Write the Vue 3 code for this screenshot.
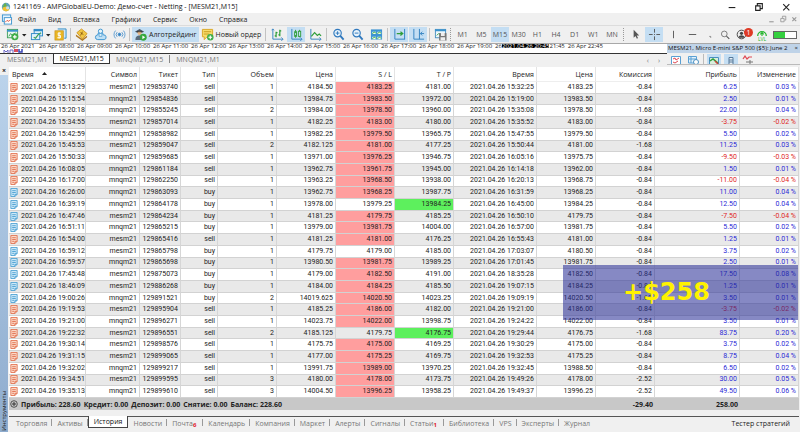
<script setup>
const menu = ['Файл', 'Вид', 'Вставка', 'Графики', 'Сервис', 'Окно', 'Справка']
const frames = ['M1', 'M5', 'M15', 'M30', 'H1', 'H4', 'D1', 'W1', 'MN']
const hours = ['2021', '08:00', '09:00', '10:00', '11:00', '12:00', '13:00', '14:00', '15:00', '16:00', '17:00', '18:00', '19:00']
const charts = ['MESM21,M1', 'MESM21,M15', 'MNQM21,M15', 'MNQM21,M1']
const columns = [
  ['Время', 77], ['Символ', 54], ['Тикет', 41], ['Тип', 37], ['Объем', 59], ['Цена', 59], ['S / L', 59],
  ['T / P', 59], ['Время', 83], ['Цена', 59], ['Комиссия', 59], ['Прибыль', 85], ['Изменение', 59]
]
const panels = [
  ['Торговля'], ['Активы'], ['История'], ['Новости'], ['Почта', 6], ['Календарь'], ['Компания'], ['Маркет'],
  ['Алерты'], ['Сигналы'], ['Статьи', 1], ['Библиотека'], ['VPS'], ['Эксперты'], ['Журнал']
]

// open time | symbol | ticket | type | volume | price | S/L | T/P | close time | price | commission | profit | change | hit
const deals = `15:13:29|mesm21|129853740|sell|1|4184.50|4183.25|4181.00|15:32:25|4183.25|-0.84|6.25|0.03|sl
15:15:54|mnqm21|129854836|sell|1|13984.75|13983.50|13972.00|15:19:00|13983.50|-0.84|2.50|0.01|sl
15:20:18|mnqm21|129855245|sell|2|13984.00|13978.50|13960.00|15:35:08|13978.50|-1.68|22.00|0.04|sl
15:34:55|mesm21|129857014|sell|1|4182.25|4183.00|4180.00|15:35:52|4183.00|-0.84|-3.75|-0.02|sl
15:42:59|mnqm21|129858982|sell|1|13982.25|13979.50|13965.75|15:47:55|13979.50|-0.84|5.50|0.02|sl
15:45:53|mesm21|129859047|sell|2|4182.125|4181.00|4177.25|15:50:44|4181.00|-1.68|11.25|0.03|sl
15:50:33|mnqm21|129859685|sell|1|13971.00|13976.25|13946.75|16:05:16|13975.75|-0.84|-9.50|-0.03|sl
16:08:05|mnqm21|129861184|sell|1|13962.75|13961.75|13945.00|16:14:18|13962.00|-0.84|1.50|0.01|sl
16:17:00|mnqm21|129862250|sell|1|13963.25|13968.50|13938.00|16:20:13|13968.75|-0.84|-11.00|-0.04|sl
16:26:00|mnqm21|129863093|buy|1|13962.75|13968.25|13987.75|16:31:59|13968.25|-0.84|11.00|0.04|sl
16:39:19|mnqm21|129864178|buy|1|13978.00|13979.25|13984.25|16:45:00|13984.25|-0.84|12.50|0.04|tp
16:47:46|mesm21|129864234|buy|1|4181.25|4179.75|4185.25|16:50:10|4179.75|-0.84|-7.50|-0.04|sl
16:51:11|mnqm21|129865215|buy|1|13979.00|13981.75|14004.00|16:57:00|13981.75|-0.84|5.50|0.02|sl
16:54:00|mesm21|129865416|sell|1|4181.25|4181.00|4176.25|16:55:43|4181.00|-0.84|1.25|0.01|sl
16:59:12|mesm21|129865798|buy|1|4179.75|4179.00|4185.00|17:03:07|4180.50|-0.84|3.75|0.02|
16:59:57|mnqm21|129865698|buy|1|13980.50|13981.75|13989.25|17:01:45|13981.75|-0.84|2.50|0.01|sl
17:45:48|mesm21|129875073|buy|1|4179.00|4182.50|4191.00|18:35:28|4182.50|-0.84|17.50|0.08|sl
18:46:09|mesm21|129886268|buy|1|4184.00|4184.25|4185.50|19:07:15|4184.25|-0.84|1.25|0.01|sl
19:00:26|mnqm21|129891521|buy|2|14019.625|14020.50|14023.25|19:09:19|14020.50|-1.68|3.50|0.01|sl
19:19:53|mesm21|129895904|sell|1|4185.25|4186.00|4182.00|19:21:00|4186.00|-0.84|-3.75|-0.02|sl
19:21:00|mnqm21|129896271|sell|1|14023.75|14022.00|13998.75|19:24:22|14022.00|-0.84|3.50|0.01|sl
19:22:32|mesm21|129896551|sell|2|4185.125|4179.75|4176.75|19:29:44|4176.75|-1.68|83.75|0.20|tp
19:30:14|mesm21|129898576|sell|1|4175.75|4175.00|4169.25|19:30:29|4175.00|-0.84|3.75|0.02|sl
19:31:15|mesm21|129899065|sell|1|4177.00|4175.25|4169.75|19:32:53|4175.25|-0.84|8.75|0.04|sl
19:32:02|mnqm21|129899217|sell|1|13991.75|13989.00|13970.25|19:32:45|13988.50|-0.84|6.50|0.02|sl
19:34:51|mesm21|129899595|sell|3|4180.00|4178.00|4173.75|19:49:26|4178.00|-2.52|30.00|0.05|sl
19:35:13|mnqm21|129899610|sell|3|14004.50|13996.25|13958.25|19:49:37|13996.25|-2.52|49.50|0.06|sl`
  .split('\n').map(l => l.split('|'))

const day = '2021.04.26 '
const isLoss = d => d[11].startsWith('-')
</script>

<template>
  <div class="app">
    <header class="title">
      <svg class="logo" viewBox="0 0 12 12"><circle cx="6" cy="6" r="5" fill="#5fa6b8" /><path d="M2 6l3-5 2 4z" fill="#6db33f" /><path d="M2 6.500l5-1 3 4-4 2-4-2z" fill="#f2c230" /><circle cx="8" cy="7" r="2" fill="#c9dfe8" /></svg>
      <h1>1241169 - AMPGlobalEU-Demo: Демо-счет - Netting - [MESM21,M15]</h1>
      <div class="win">
        <button aria-label="Свернуть"><svg viewBox="0 0 9 9"><path d="M1.500 5h6" stroke="#222" /></svg></button>
        <button aria-label="Восстановить"><svg viewBox="0 0 9 9"><path d="M1.500 3.500h4v4h-4zM3 3V1.500h4.500V6H6" fill="none" stroke="#222" /></svg></button>
        <button aria-label="Закрыть"><svg viewBox="0 0 9 9"><path d="M2 2l5.500 5.500M7.500 2L2 7.500" stroke="#222" /></svg></button>
      </div>
    </header>

    <nav class="menu">
      <svg class="doc" viewBox="0 0 12 12"><rect x="1" y="1" width="9" height="7" fill="#e6f3fc" stroke="#3a93cf" /><rect x="3" y="4" width="8" height="7" fill="#fff" stroke="#3a93cf" /><path d="M4 9l2-2 2 1 2-2" fill="none" stroke="#e0523a" /></svg>
      <a v-for="m in menu" :key="m" href="#">{{ m }}</a>
      <div class="win inner">
        <button aria-label="Свернуть окно"><svg viewBox="0 0 9 9"><path d="M2 7h4" stroke="#999" /></svg></button>
        <button aria-label="Восстановить окно"><svg viewBox="0 0 9 9"><path d="M2.500 4h3v3h-3zM4 3.500V2h3v3.500H6" fill="none" stroke="#999" stroke-width=".8" /></svg></button>
        <button aria-label="Закрыть окно"><svg viewBox="0 0 9 9"><path d="M3 3l3.500 3.500M6.500 3L3 6.500" stroke="#999" /></svg></button>
      </div>
    </nav>

    <div class="tools">
      <button class="tool" aria-label="Новый график"><svg viewBox="0 0 14 14"><rect x="1.500" y="1.500" width="11" height="9" fill="#e9f7ef" stroke="#41a05a" /><path d="M1 3h12" stroke="#3a93cf" stroke-width="2" /><path d="M3 9l2-3 2 2 3-3" fill="none" stroke="#41a05a" /><circle cx="9.500" cy="9.500" r="3.800" fill="#3fae49" /><path d="M9.500 7.500v4M7.500 9.500h4" stroke="#fff" stroke-width="1.200" /></svg></button>
      <button class="drop" aria-label="Список графиков"><svg viewBox="0 0 6 4"><path d="M1 1h4.500L3.200 3.600z" fill="#222" /></svg></button>
      <button class="tool" aria-label="Профили"><svg viewBox="0 0 14 14"><rect x="4.500" y="1.500" width="9" height="7" fill="#dff1fb" stroke="#2f8bc6" /><path d="M4 2.500h10" stroke="#2f8bc6" stroke-width="2" /><rect x="1.500" y="6" width="9" height="6.500" fill="#dff1fb" stroke="#2f8bc6" /><path d="M4 10l2 1 3-4 3-2" fill="none" stroke="#41a05a" stroke-width="1.300" /></svg></button>
      <button class="drop" aria-label="Список профилей"><svg viewBox="0 0 6 4"><path d="M1 1h4.500L3.200 3.600z" fill="#222" /></svg></button>
      <button class="tool" aria-label="Обзор рынка"><svg viewBox="0 0 14 14"><path d="M4 1h9v10h-2" fill="#cfe7f7" stroke="#2f8bc6" /><rect x="1" y="3" width="9" height="10" fill="#e9b624" stroke="#c8911a" stroke-width=".7" /><path d="M7.500 5.500H4.500V8h2.500v2.500H3.500M5.500 4.500v7" fill="none" stroke="#fff" /></svg></button>
      <i class="sep"></i>
      <div class="group wide">
        <button class="tool" aria-label="Навигатор"><svg viewBox="0 0 14 14"><path d="M2 5l5-4 6 5-5 6z" fill="#f1c644" stroke="#c98b16" stroke-width=".8" /><path d="M1 7l7 5 5-4v2l-5 4-7-5z" fill="#b27a1f" /><path d="M6 5l3 2M8 4l-2 4" stroke="#8a5c13" /></svg></button>
        <button class="tool" aria-label="Облако"><svg viewBox="0 0 14 14"><path d="M4 12.500a2.500 2.500 0 010-5 3 3 0 016 0 2.500 2.500 0 011 5z" fill="#bfe0f5" stroke="#3a93cf" /><circle cx="7" cy="3.500" r="2.300" fill="#e5f4fc" stroke="#3a93cf" /><path d="M5.500 6h3v3h-3z" fill="#e5f4fc" stroke="#3a93cf" stroke-width=".7" /></svg></button>
        <button class="tool" aria-label="Сигналы"><svg viewBox="0 0 14 14" fill="none" stroke="#5a9bd0"><circle cx="7" cy="7" r="1.500" fill="#2f7fbf" /><path d="M4.500 4.500a3.500 3.500 0 000 5M9.500 4.500a3.500 3.500 0 010 5M2.800 2.800a6 6 0 000 8.400M11.200 2.800a6 6 0 010 8.400" /></svg></button>
      </div>
      <i class="sep"></i>
      <button class="tool label on"><svg viewBox="0 0 14 14"><path d="M1 4l5-3 5 3-5 2z" fill="#4b5563" /><circle cx="6" cy="5.500" r="2.300" fill="#e8b88a" /><path d="M3 4h6" stroke="#333" /><path d="M1.500 13c0-4 2-5 4.500-5s4.500 1 4.500 5z" fill="#5b6b7c" /><circle cx="10" cy="10" r="3.700" fill="#35a83c" /><path d="M9 8l3 2-3 2z" fill="#fff" /></svg>Алготрейдинг</button>
      <button class="tool label"><svg viewBox="0 0 14 14"><path d="M1.500 1.500h11v8h-6l-3 3v-3h-2z" fill="#f7dc6b" stroke="#d9a520" /><path d="M3 4h8M3 6.500h6" stroke="#c79a1c" /><circle cx="10" cy="10" r="3.500" fill="#3fae49" /><path d="M10 8v4M8 10h4" stroke="#fff" stroke-width="1.200" /></svg>Новый ордер</button>
      <i class="sep"></i>
      <div class="group">
        <button class="tool" aria-label="Бары"><svg viewBox="0 0 14 14" fill="none"><path d="M2 1v11h11" stroke="#2f7fbf" /><path d="M11 10l2 2-2 2M.5 2.500L2 1l1.500 1.500" stroke="#2f7fbf" stroke-width=".8" /><path d="M5.500 4v6M4 8.500h1.500M5.500 5H7M9.500 2v7M8 7.500h1.500M9.500 3H11" stroke="#2f9e3a" stroke-width="1.300" /></svg></button>
        <button class="tool on" aria-label="Свечи"><svg viewBox="0 0 14 14" fill="none"><path d="M2 1v11h11" stroke="#2f7fbf" /><path d="M11 10l2 2-2 2" stroke="#2f7fbf" stroke-width=".8" /><rect x="5" y="4" width="2" height="5" stroke="#2f9e3a" /><rect x="9" y="3.500" width="2.500" height="5.500" stroke="#2f9e3a" /><path d="M6 2v2M6 9v1.500M10.300 2v1.500M10.300 9v1" stroke="#2f9e3a" /></svg></button>
        <button class="tool" aria-label="Линия"><svg viewBox="0 0 14 14" fill="none"><path d="M2 1v11h11" stroke="#2f7fbf" /><path d="M11 10l2 2-2 2" stroke="#2f7fbf" stroke-width=".8" /><path d="M2.500 9L6 5l3 3 2-1.500 2 2" stroke="#2f9e3a" stroke-width="1.300" /></svg></button>
      </div>
      <i class="sep"></i>
      <div class="group">
        <button class="tool" aria-label="Увеличить"><svg viewBox="0 0 14 14" fill="none" stroke="#2f78bd"><circle cx="6" cy="5.500" r="4" fill="#e6f2fb" stroke-width="1.200" /><path d="M9 8.500l3.500 4" stroke-width="2" /><path d="M6 3.500v4M4 5.500h4" /></svg></button>
        <button class="tool" aria-label="Уменьшить"><svg viewBox="0 0 14 14" fill="none" stroke="#2f78bd"><circle cx="6" cy="5.500" r="4" fill="#e6f2fb" stroke-width="1.200" /><path d="M9 8.500l3.500 4" stroke-width="2" /><path d="M4 5.500h4" /></svg></button>
        <button class="tool" aria-label="Плитка"><svg viewBox="0 0 14 14"><path d="M1 1.500h12v11H1z" fill="#3d94d2" /><path d="M2.500 4h4v2.500h-4zM8 4h4v2.500H8zM2.500 9.500h4V12h-4zM8 9.500h4V12H8z" fill="#f4fbe9" /><path d="M2.500 6l2-1.500 2 1M8 6l2-1.500 2 1M2.500 11.500l2-1.500 2 1M8 11.500l2-1.500 2 1" stroke="#3fae49" fill="none" /></svg></button>
      </div>
      <i class="sep"></i>
      <div class="group">
        <button class="tool on" aria-label="Автопрокрутка"><svg viewBox="0 0 14 14" fill="none" stroke="#2f7fbf"><path d="M2 1v11h11" /><path d="M12.500 1v11" /><path d="M4 6h6M8 4l2.500 2L8 8" stroke="#2f9e3a" stroke-width="1.300" /></svg></button>
        <button class="tool on" aria-label="Сдвиг графика"><svg viewBox="0 0 14 14" fill="none" stroke="#2f7fbf"><path d="M2 1v11h11M8 1v11" /><path d="M9 6h4M11 4L9 6l2 2" /></svg></button>
      </div>
      <i class="sep"></i>
      <button class="tool" aria-label="Шаблоны"><svg viewBox="0 0 14 14"><rect x="1.500" y="1.500" width="11" height="9" fill="#eef7fc" stroke="#4a90bf" /><path d="M1 2.500h12" stroke="#3a93cf" stroke-width="2" /><path d="M3 8l2-2 2 1" stroke="#2f9e3a" fill="none" /><rect x="5.500" y="5.500" width="8" height="8" fill="#777" /><path d="M7.500 5.500h4v3h-4zM7 10h5v3.500H7z" fill="#eee" /></svg></button>
      <i class="sep dots"></i>
      <div class="frames">
        <button v-for="f in frames" :key="f" :class="{ on: f === 'M15' }">{{ f }}</button>
      </div>
      <i class="sep dots"></i>
      <div class="group">
        <button class="tool" aria-label="Курсор"><svg viewBox="0 0 14 14"><path d="M5 2v8.500l2-2 1.500 3 1.200-.7L8.300 8H11z" fill="#555" /></svg></button>
        <button class="tool on" aria-label="Перекрестие"><svg viewBox="0 0 14 14"><path d="M7 1v4M7 9v4M1 7h4M9 7h4M6.500 7h1" stroke="#555" /></svg></button>
        <button class="tool" aria-label="Вертикальная линия"><svg viewBox="0 0 14 14"><path d="M7 3v8" stroke="#555" /></svg></button>
        <button class="tool" aria-label="Горизонтальная линия"><svg viewBox="0 0 14 14"><path d="M3 7h8" stroke="#555" /></svg></button>
      </div>
      <div class="side">
        <button class="small" aria-label="Ещё"><svg viewBox="0 0 14 14"><path d="M6 9h2v2" fill="none" stroke="#666" /></svg></button>
        <button class="small" aria-label="Поиск"><svg viewBox="0 0 14 14" fill="none" stroke="#555"><circle cx="6" cy="5.500" r="4" /><path d="M9 8.500l4 4" stroke-width="1.500" /></svg></button>
        <button class="user" aria-label="Сообщения"><svg viewBox="0 0 14 14"><circle cx="7" cy="7" r="5.500" fill="#eee" stroke="#444" stroke-width="1.200" /><circle cx="7" cy="5.500" r="2" fill="#444" /><path d="M3 11c1-4 7-4 8 0z" fill="#444" /></svg><b>1</b></button>
        <button class="lvl" aria-label="Уровень"><svg viewBox="0 0 14 9"><path d="M2 8a5 5 0 1110 0" fill="none" stroke="#25b52d" stroke-width="1.500" /><path d="M7 8V4M5 6l2-2 2 2" fill="none" stroke="#25b52d" stroke-width="1.300" /></svg><span>LVL</span></button>
        <div class="battery"><i></i></div>
      </div>
    </div>

    <div class="upper">
      <div class="work">
        <div class="axis">
          <span v-for="h in hours" :key="h" class="tick">26 Apr {{ h }}</span>
          <span class="cut">26</span><span class="now">2021.04.26 20:45</span><span>21:45</span><span class="last">26 Apr 22:45</span>
          <svg class="marks" viewBox="0 0 20 5"><path d="M1 5V2l2 2 2-2v3M7 5V2h3v3" fill="none" stroke="#6a67c4" /><path d="M11 1h4v3h-4z" fill="#d84b5c" /><path d="M16 1v3h3V1" fill="none" stroke="#3b46b8" stroke-width="1.500" /></svg>
        </div>
        <div class="charts">
          <button v-for="c in charts" :key="c" :class="{ active: c === 'MESM21,M15' }">{{ c }}</button>
          <div class="arrows"><button aria-label="Влево">‹</button><button aria-label="Вправо">›</button></div>
        </div>
      </div>
      <aside class="depth">
        <div class="cap"><span>MESM21, Micro E-mini S&amp;P 500 ($5): June 2</span><button aria-label="Закрыть стакан">×</button></div>
        <div class="icons">
          <button aria-label="Тики"><svg viewBox="0 0 12 9"><path d="M1.500 9V1.500h9V9" fill="#fff" stroke="#5aa0d4" /><path d="M3 4l2-1 1 2 3-2M3 7l2 1 3-2" fill="none" stroke="#df4a55" /></svg></button>
          <button aria-label="Таблица"><svg viewBox="0 0 12 9"><path d="M1.500 1.500h8V8h-8zM1 4h9M4 2v6" fill="#e4f2fb" stroke="#5aa0d4" /><circle cx="9" cy="7" r="2.500" fill="#fff" stroke="#4a8fc0" /></svg></button>
          <i></i>
          <button class="on" aria-label="Торговля"><svg viewBox="0 0 12 9"><path d="M1.500 9V2.500h9V9" fill="#d7efdc" stroke="#4a90bf" /><path d="M2 6l3-2 5 4" fill="none" stroke="#2f9e3a" stroke-width="1.500" /><path d="M7 6l3 3" stroke="#d0453c" stroke-width="1.500" /></svg></button>
          <button class="on" aria-label="Объёмы"><svg viewBox="0 0 12 9"><path d="M4 9V2.500h4V9M4 5h4M4 7h4" fill="#e8f1f8" stroke="#55799a" /></svg></button>
          <button aria-label="Спред"><svg viewBox="0 0 12 9"><path d="M1 4l2-3 2 3 2-2 3 0" fill="none" stroke="#df4a55" stroke-width="1.200" /><path d="M4 7h7M8 5v4" stroke="#777" /></svg></button>
        </div>
      </aside>
    </div>

    <div class="terminal">
      <div class="strip">
        <button aria-label="Закрыть панель">×</button>
        <span>Инструменты</span>
      </div>
      <main class="body">
        <table>
          <colgroup><col v-for="(c, i) in columns" :key="i" :style="{ width: c[1] + 'px' }"></colgroup>
          <thead>
            <tr><th v-for="(c, i) in columns" :key="i">{{ c[0] }}<svg v-if="i === 0" class="sort" viewBox="0 0 5 3"><path d="M0 3h5L2.500 0z" fill="#222" /></svg></th></tr>
          </thead>
          <tbody>
            <tr v-for="d in deals" :key="d[2]">
              <td><div class="first"><svg class="note" :class="d[3]" viewBox="0 0 8 10"><path d="M.5.500h7v6.500l-2.500 2.500H.5z" /><path d="M2 3h4M2 5h4M2 7h2M7.500 7H5v2.500" /></svg>{{ day + d[0] }}</div></td>
              <td>{{ d[1] }}</td><td>{{ d[2] }}</td><td>{{ d[3] }}</td><td>{{ d[4] }}</td><td>{{ d[5] }}</td>
              <td :class="{ sl: d[13] === 'sl' }">{{ d[6] }}</td>
              <td :class="{ tp: d[13] === 'tp' }">{{ d[7] }}</td>
              <td>{{ day + d[8] }}</td><td>{{ d[9] }}</td><td>{{ d[10] }}</td>
              <td :class="isLoss(d) ? 'loss' : 'gain'">{{ d[11] }}</td>
              <td :class="isLoss(d) ? 'loss' : 'gain'">{{ d[12] }} %</td>
            </tr>
          </tbody>
          <tfoot>
            <tr>
              <td colspan="10"><div class="first"><svg class="plus" viewBox="0 0 8 8"><circle cx="4" cy="4" r="3.300" fill="none" stroke="#333" stroke-width=".8" /><path d="M4 2v4M2 4h4" stroke="#333" /></svg><span>Прибыль: 228.60</span><span>Кредит: 0.00</span><span>Депозит: 0.00</span><span>Снятие: 0.00</span><span>Баланс: 228.60</span></div></td>
              <td>-29.40</td><td>258.00</td><td></td>
            </tr>
          </tfoot>
        </table>
        <div class="panels">
          <button v-for="p in panels" :key="p[0]" :class="{ active: p[0] === 'История' }">{{ p[0] }}<sub v-if="p[1]">{{ p[1] }}</sub></button>
          <button class="tester">Тестер стратегий</button>
        </div>
        <div class="total">+$258</div>
      </main>
    </div>
  </div>
</template>

<style>
body { margin: 0; background: #f0f0f0; }
</style>

<style scoped>
.app { display: flex; flex-direction: column; min-height: 100vh; overflow: hidden; background: #f0f0f0; color: #222; font: 7px/9px "Open Sans", "Noto Sans", sans-serif; white-space: nowrap; }
button { display: flex; align-items: center; justify-content: center; margin: 0; padding: 0; border: 0; background: none; color: inherit; font: inherit; }
svg { display: block; flex: none; }
a { color: inherit; text-decoration: none; }

.title { display: flex; align-items: center; height: 13px; padding-left: 1px; background: #fff; }
.logo { width: 10px; height: 10px; margin-right: 2px; }
h1 { margin: 0; font: inherit; color: #111; }
.win { display: flex; gap: 17px; margin-left: auto; padding-right: 9px; }
.win svg { width: 10px; height: 10px; }
.menu { display: flex; align-items: center; gap: 12px; height: 12px; border-bottom: 1px solid #dcdcdc; padding-left: 1px; }
.doc { width: 12px; height: 11px; margin-right: -7px; }
.inner { gap: 1px; padding-right: 1px; }

.tools { display: flex; align-items: center; height: 17px; padding: 0 3px 0 4px; border-bottom: 1px solid #a8a8a8; }
.tool { width: 18px; height: 15px; }
.tools > .tool:not(.label), .wide .tool { width: 16px; }
.tool svg, .small svg, .user svg { width: 13px; height: 13px; }
.drop { width: 8px; }
.drop svg { width: 6px; height: 4px; }
.on { background: #c4def3; }
.group { display: flex; gap: 1px; }
.wide { gap: 3px; }
.sep { width: 1px; height: 13px; margin: 0 2px; background: #c2c2c2; }
.dots { width: 0; background: none; border-left: 1px dotted #999; }
.tool.label { width: auto; gap: 2px; padding: 0 2px; }
.frames { display: grid; grid-template-columns: repeat(9, 1fr); flex: 0 0 168px; height: 15px; color: #555; }
.side { display: flex; align-items: center; margin-left: auto; gap: 2px; }
.small { width: 13px; }
.small svg { width: 10px; height: 10px; }
.user { width: 20px; position: relative; }
.user svg { margin-right: 4px; width: 11px; height: 11px; }
.user b { position: absolute; right: 0; top: -1px; width: 9px; height: 9px; border-radius: 50%; background: #de3a25; color: #fff; font-weight: 400; }
.lvl { flex-direction: column; width: 14px; color: #25b52d; font-size: 5px; line-height: 4px; }
.lvl svg { width: 12px; height: 8px; }
.battery { width: 22px; height: 6px; margin-left: 2px; border: 1px solid #666; background: #fff; }
.battery i { display: block; width: 50%; height: 100%; background: #35d03f; }

.upper { display: flex; height: 22px; }
.work { flex: 1; min-width: 0; display: flex; flex-direction: column; }
.axis { position: relative; display: flex; height: 9px; overflow: hidden; padding-left: 1px; background: #fff; font-size: 6px; line-height: 4px; border-bottom: 1px solid #333; }
.axis span { flex: none; }
.tick { width: 37px; margin-right: 1px; }
.axis .cut { width: 7px; }
.now { height: 4px; background: #000; color: #fff; }
.last { margin-left: 3px; }
.marks { position: absolute; left: 3px; top: 4px; width: 20px; height: 5px; }
.charts { display: flex; height: 12px; color: #777; }
.charts > button { padding: 0 6px; height: 10px; }
.charts > button:first-child { padding-left: 7px; }
.charts > button.active { height: 11px; margin: -1px 0 0; padding: 0 5px; border: 1px solid #333; border-top: 0; background: #fff; color: #111; }
.charts > button.active + button { border-right: 1px solid #888; height: 8px; margin-top: 1px; }
.arrows { display: flex; gap: 9px; margin-left: auto; padding-right: 7px; }
.depth { flex: 0 0 133px; background: #f0f0f0; overflow: hidden; }
.cap { display: flex; justify-content: space-between; height: 9px; padding: 0 2px 0 1px; background: #bfd3e8; color: #111; font-size: 6px; overflow: hidden; }
.icons { display: flex; gap: 3px; height: 10px; padding: 1px 0 0 2px; border-bottom: 1px solid #bbb; }
.icons button { width: 14px; height: 10px; }
.icons button svg { width: 12px; height: 9px; }
.icons i { width: 1px; background: #bbb; }

.terminal { flex: 1; display: flex; }
.strip { display: flex; flex-direction: column; justify-content: space-between; align-items: center; flex: 0 0 8px; background: linear-gradient(#bcd4ec, #8eacce); overflow: hidden; }
.strip button { width: 100%; height: 9px; background: #f0f0f0; font-weight: 700; }
.strip span { writing-mode: vertical-rl; transform: rotate(180deg); line-height: 8px; padding-top: 1px; font-size: 6px; }
.body { position: relative; flex: 1; min-width: 0; display: flex; flex-direction: column; padding: 1px 1px 2px; }
table { flex: 1; width: 100%; table-layout: fixed; border-collapse: separate; border-spacing: 0; background: #fff; }
th, td { padding: 0 2px; text-align: right; border-right: 1px solid #d6d6d6; border-bottom: 1px solid #d2d2d2; line-height: 9px; }
tbody td { font-family: Roboto, "Open Sans", sans-serif; }
th { height: 14px; font-weight: 400; color: #222; border-right-color: #e4e4e4; border-bottom-color: #eee; }
th:first-child { text-align: left; padding-left: 3px; }
td:first-child { padding: 0 0 0 1px; }
.sort { display: inline-block; width: 5px; height: 3px; margin: 0 0 2px 8px; }
tbody tr:nth-child(even) { background: #e9e9e9; }
.first { display: flex; align-items: center; gap: 3px; }
.note { width: 8px; height: 9px; fill: none; }
.sell { stroke: #e2704f; }
.sell path:first-child { fill: #fbd9c9; }
.buy { stroke: #4a9fd3; }
.buy path:first-child { fill: #cfe9f8; }
.sl { background: #ff9e9e; }
.tp { background: #5df05d; }
.gain { color: #2a2ad6; }
.loss { color: #e01f1f; }
tfoot td { height: 12px; border: 0; background: #c8c8c8; font-weight: 700; }
.plus { width: 8px; height: 8px; }
.panels { display: flex; height: 13px; margin-top: 6px; padding-left: 2px; border-top: 1px solid #555; color: #777; }
.panels button { position: relative; padding: 0 5px; height: 12px; }
.panels button::after { content: ""; position: absolute; right: 0; top: 2px; height: 7px; border-right: 1px solid #999; }
.panels button.active { margin: -1px 0 0; border: 1px solid #444; border-top: 0; background: #fff; color: #111; }
.panels button.active::after, .panels button:nth-last-child(-n+2)::after { content: none; }
sub { align-self: flex-end; margin-right: 2px; color: #e0202c; font-size: 6px; font-weight: 700; line-height: 7px; }
.panels .tester { margin-left: auto; padding-right: 9px; color: #222; }
.total { position: absolute; right: 2px; top: 199px; width: 235px; height: 55px; background: rgba(40, 44, 150, .56); color: #fff200; font: 700 24px/55px "DejaVu Sans", sans-serif; text-align: center; text-indent: -28px; }
</style>
